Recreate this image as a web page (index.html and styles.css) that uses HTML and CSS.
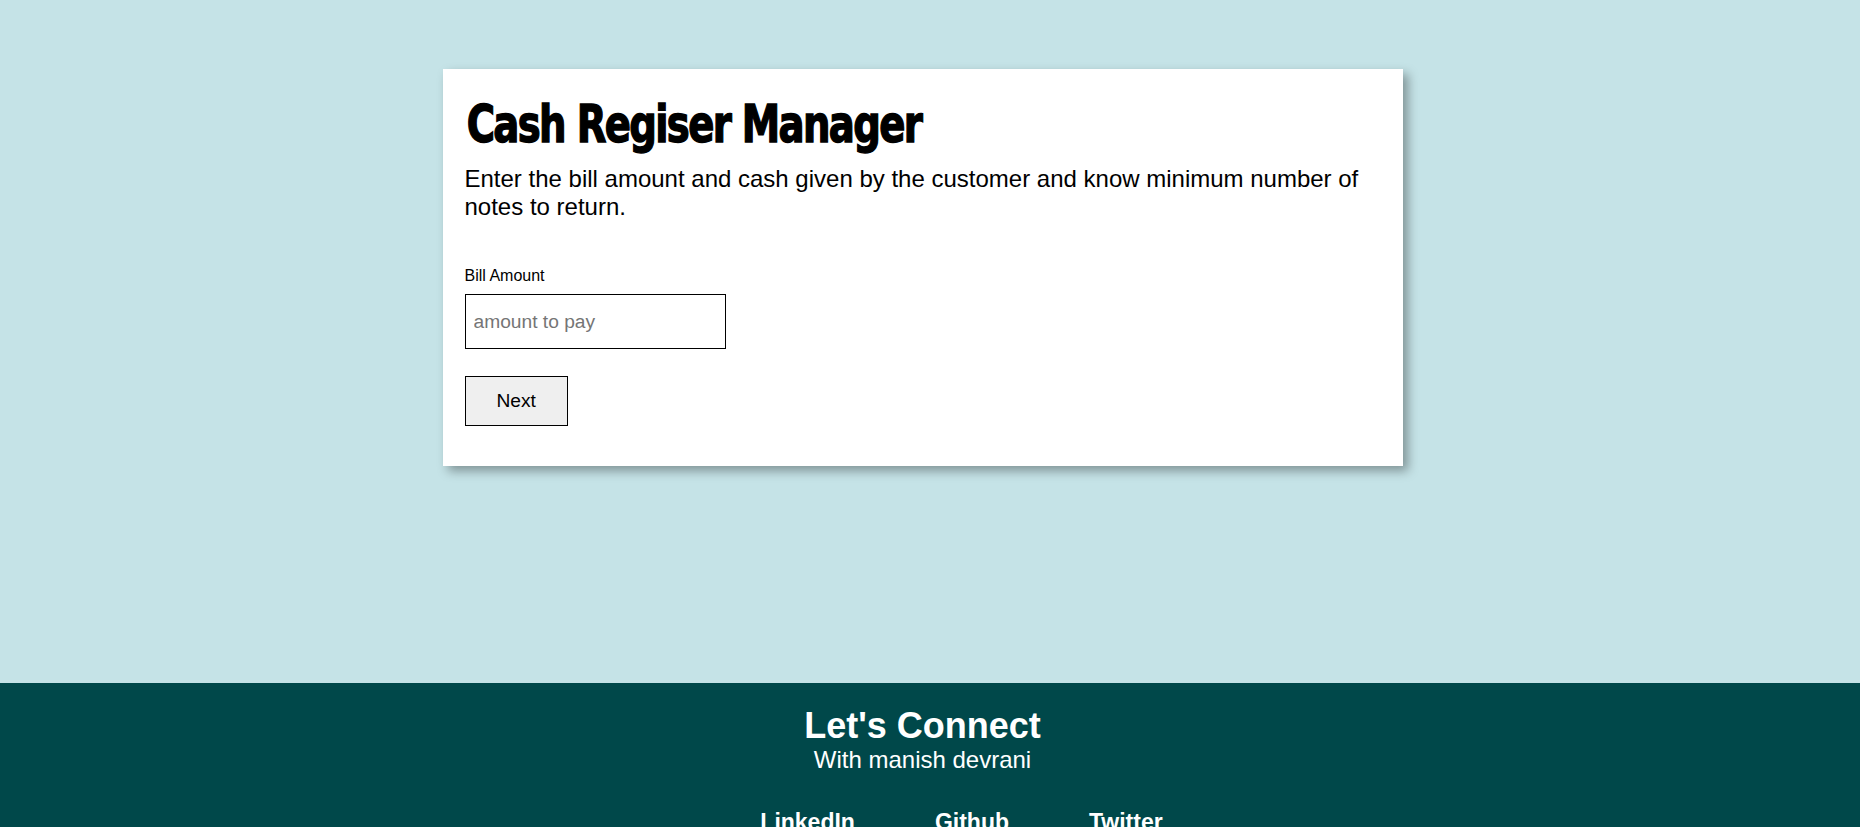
FILE: index.html
```html
<!DOCTYPE html>
<html lang="en">
<head>
<meta charset="utf-8">
<title>Cash Register Manager</title>
<link rel="stylesheet" href="styles.css">
</head>
<body>
<main class="main">
  <section class="card">
    <h1 class="title">Cash Regiser Manager</h1>
    <p class="intro">Enter the bill amount and cash given by the customer and know minimum number of notes to return.</p>
    <label class="label" for="bill">Bill Amount</label>
    <input class="input" id="bill" type="number" placeholder="amount to pay">
    <button class="btn" type="button">Next</button>
  </section>
</main>
<footer class="footer">
  <div class="footer-inner">
    <h2 class="footer-title">Let's Connect</h2>
    <div class="footer-sub">With manish devrani</div>
    <ul class="links">
      <li><a class="link" href="#">LinkedIn</a></li>
      <li><a class="link" href="#">Github</a></li>
      <li><a class="link" href="#">Twitter</a></li>
    </ul>
  </div>
</footer>
</body>
</html>
```
FILE: styles.css
```css
html, body {
  margin: 0;
  padding: 0;
}
body {
  background: #c5e3e7;
  font-family: "Liberation Sans", Arial, sans-serif;
  color: #000;
}
.main {
  height: 683px;
  padding-right: 15px;
  box-sizing: border-box;
  padding-top: 69px;
}
.card {
  width: 960px;
  box-sizing: border-box;
  margin: 0 auto;
  background: #fff;
  padding: 22px 22px 40px 22px;
  box-shadow: 5px 5px 10px rgba(0, 0, 0, 0.35);
  display: flex;
  flex-direction: column;
  align-items: flex-start;
}
.title {
  margin: 0;
  padding: 4px 0 0 2px;
  font-family: Impact, "Liberation Sans Narrow", "DejaVu Sans Condensed", sans-serif;
  font-weight: 700;
  font-size: 52px;
  line-height: 58px;
  letter-spacing: -2px;
  -webkit-text-stroke: 1.4px #000;
  transform: scaleX(0.825);
  transform-origin: left center;
  white-space: nowrap;
}
.intro {
  margin: 12px 0 0 0;
  font-size: 24px;
  line-height: 28px;
}
.label {
  margin-top: 46px;
  font-size: 16px;
  line-height: 18.4px;
}
.input {
  margin-top: 9px;
  width: 261px;
  height: 55px;
  box-sizing: border-box;
  border: 1px solid #000;
  padding: 0 8px;
  font-family: "Liberation Sans", Arial, sans-serif;
  font-size: 19.2px;
  outline: none;
}
.input::placeholder {
  color: #757575;
}
.btn {
  margin-top: 27px;
  height: 50px;
  box-sizing: border-box;
  padding: 0 31px;
  border: 1px solid #000;
  background: #efefef;
  font-family: "Liberation Sans", Arial, sans-serif;
  font-size: 19.2px;
  color: #000;
}
.footer {
  background: #00484a;
  color: #fff;
  padding-top: 22px;
  padding-bottom: 40px;
}
.footer-inner {
  padding-right: 15px;
  text-align: center;
}
.footer-title {
  margin: 0;
  font-size: 36px;
  line-height: 41.4px;
  font-weight: 700;
}
.footer-sub {
  font-size: 24px;
  line-height: 27.6px;
}
.links {
  list-style: none;
  margin: 35px 0 0 0;
  padding: 0 0 0 78px;
  display: flex;
  justify-content: center;
  gap: 80px;
}
.link {
  color: #fff;
  text-decoration: none;
  font-weight: 700;
  font-size: 23px;
  line-height: 26.5px;
}
```
